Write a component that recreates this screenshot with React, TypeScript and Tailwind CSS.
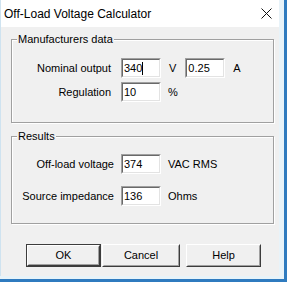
import React from 'react';

const Field = ({ value, caret }: { value: string; caret?: boolean }) => (
  <div className="w-[40px] h-[20px] border border-t-[#a0a0a0] border-l-[#a0a0a0] border-b-white border-r-white">
    <div className="w-full h-full bg-white border border-t-[#696969] border-l-[#696969] border-b-[#e3e3e3] border-r-[#e3e3e3] flex items-center pl-[1px] text-[11px] leading-none text-black">
      {value}
      {caret && <span className="inline-block w-px h-[13px] bg-black" />}
    </div>
  </div>
);

const GroupBox = ({ title, className, children }: { title: string; className: string; children: React.ReactNode }) => (
  <div className={`relative ml-[10px] w-[263px] border border-[#a0a0a0] shadow-[inset_1px_1px_0_white,1px_1px_0_white] ${className}`}>
    <span className="absolute -top-[8px] left-[5px] bg-[#f0f0f0] px-[1px] text-[11px] leading-[14px] text-black">{title}</span>
    {children}
  </div>
);

const Button = ({ label, isDefault, width }: { label: string; isDefault?: boolean; width: string }) => (
  <div className={`${width} h-[23px] ${isDefault ? 'border border-[#3c3c3c]' : ''}`}>
    <div className="w-full h-full border border-t-white border-l-white border-b-[#3c3c3c] border-r-[#3c3c3c]">
      <div className="w-full h-full border border-t-[#f0f0f0] border-l-[#f0f0f0] border-b-[#a0a0a0] border-r-[#a0a0a0] bg-[#f0f0f0] flex items-center justify-center text-[11px] leading-none text-black">
        {label}
      </div>
    </div>
  </div>
);

export default function App() {
  return (
    <div className="w-[287px] h-[282px] bg-[#e8f3f9] border-r-[3px] border-b-[3px] border-r-[#2f7bbf] border-b-[#2f7bbf] font-['Liberation_Sans',Arial,sans-serif]">
      <div className="w-[279px] h-[276px] flex flex-col border-l border-[#cfe3f0]">
        {/* Title bar */}
        <div className="h-[27px] bg-white flex items-center justify-between pl-[3px] pr-[6px] shrink-0">
          <span className="text-[12px] text-black">Off-Load Voltage Calculator</span>
          <svg width="11" height="11" viewBox="0 0 11 11" className="mr-[1px]">
            <path d="M0.5 0.5 L10.5 10.5 M10.5 0.5 L0.5 10.5" stroke="#111" strokeWidth="1" />
          </svg>
        </div>

        {/* Body */}
        <div className="flex-1 bg-[#f0f0f0] pt-[12px]">
          <GroupBox title="Manufacturers data" className="h-[84px]">
            <div className="flex flex-col gap-[4px] pt-[18px]">
              <div className="flex items-center">
                <span className="w-[99px] text-right text-[11px] text-black">Nominal output</span>
                <div className="ml-[10px]"><Field value="340" caret /></div>
                <span className="ml-[8px] text-[11px] text-black">V</span>
                <div className="ml-[9px]"><Field value="0.25" /></div>
                <span className="ml-[8px] text-[11px] text-black">A</span>
              </div>
              <div className="flex items-center">
                <span className="w-[99px] text-right text-[11px] text-black">Regulation</span>
                <div className="ml-[10px]"><Field value="10" /></div>
                <span className="ml-[7px] text-[11px] text-black">%</span>
              </div>
            </div>
          </GroupBox>

          <GroupBox title="Results" className="h-[88px] mt-[13px]">
            <div className="flex flex-col gap-[12px] pt-[17px]">
              <div className="flex items-center">
                <span className="w-[102px] text-right text-[11px] text-black">Off-load voltage</span>
                <div className="ml-[7px]"><Field value="374" /></div>
                <span className="ml-[7px] text-[11px] text-black">VAC RMS</span>
              </div>
              <div className="flex items-center">
                <span className="w-[102px] text-right text-[11px] text-black">Source impedance</span>
                <div className="ml-[7px]"><Field value="136" /></div>
                <span className="ml-[7px] text-[11px] text-black">Ohms</span>
              </div>
            </div>
          </GroupBox>

          <div className="flex mt-[20px] ml-[25px]">
            <Button label="OK" isDefault width="w-[75px]" />
            <div className="ml-[1px]"><Button label="Cancel" width="w-[78px]" /></div>
            <div className="ml-[6px]"><Button label="Help" width="w-[75px]" /></div>
          </div>
        </div>
      </div>
    </div>
  );
}
